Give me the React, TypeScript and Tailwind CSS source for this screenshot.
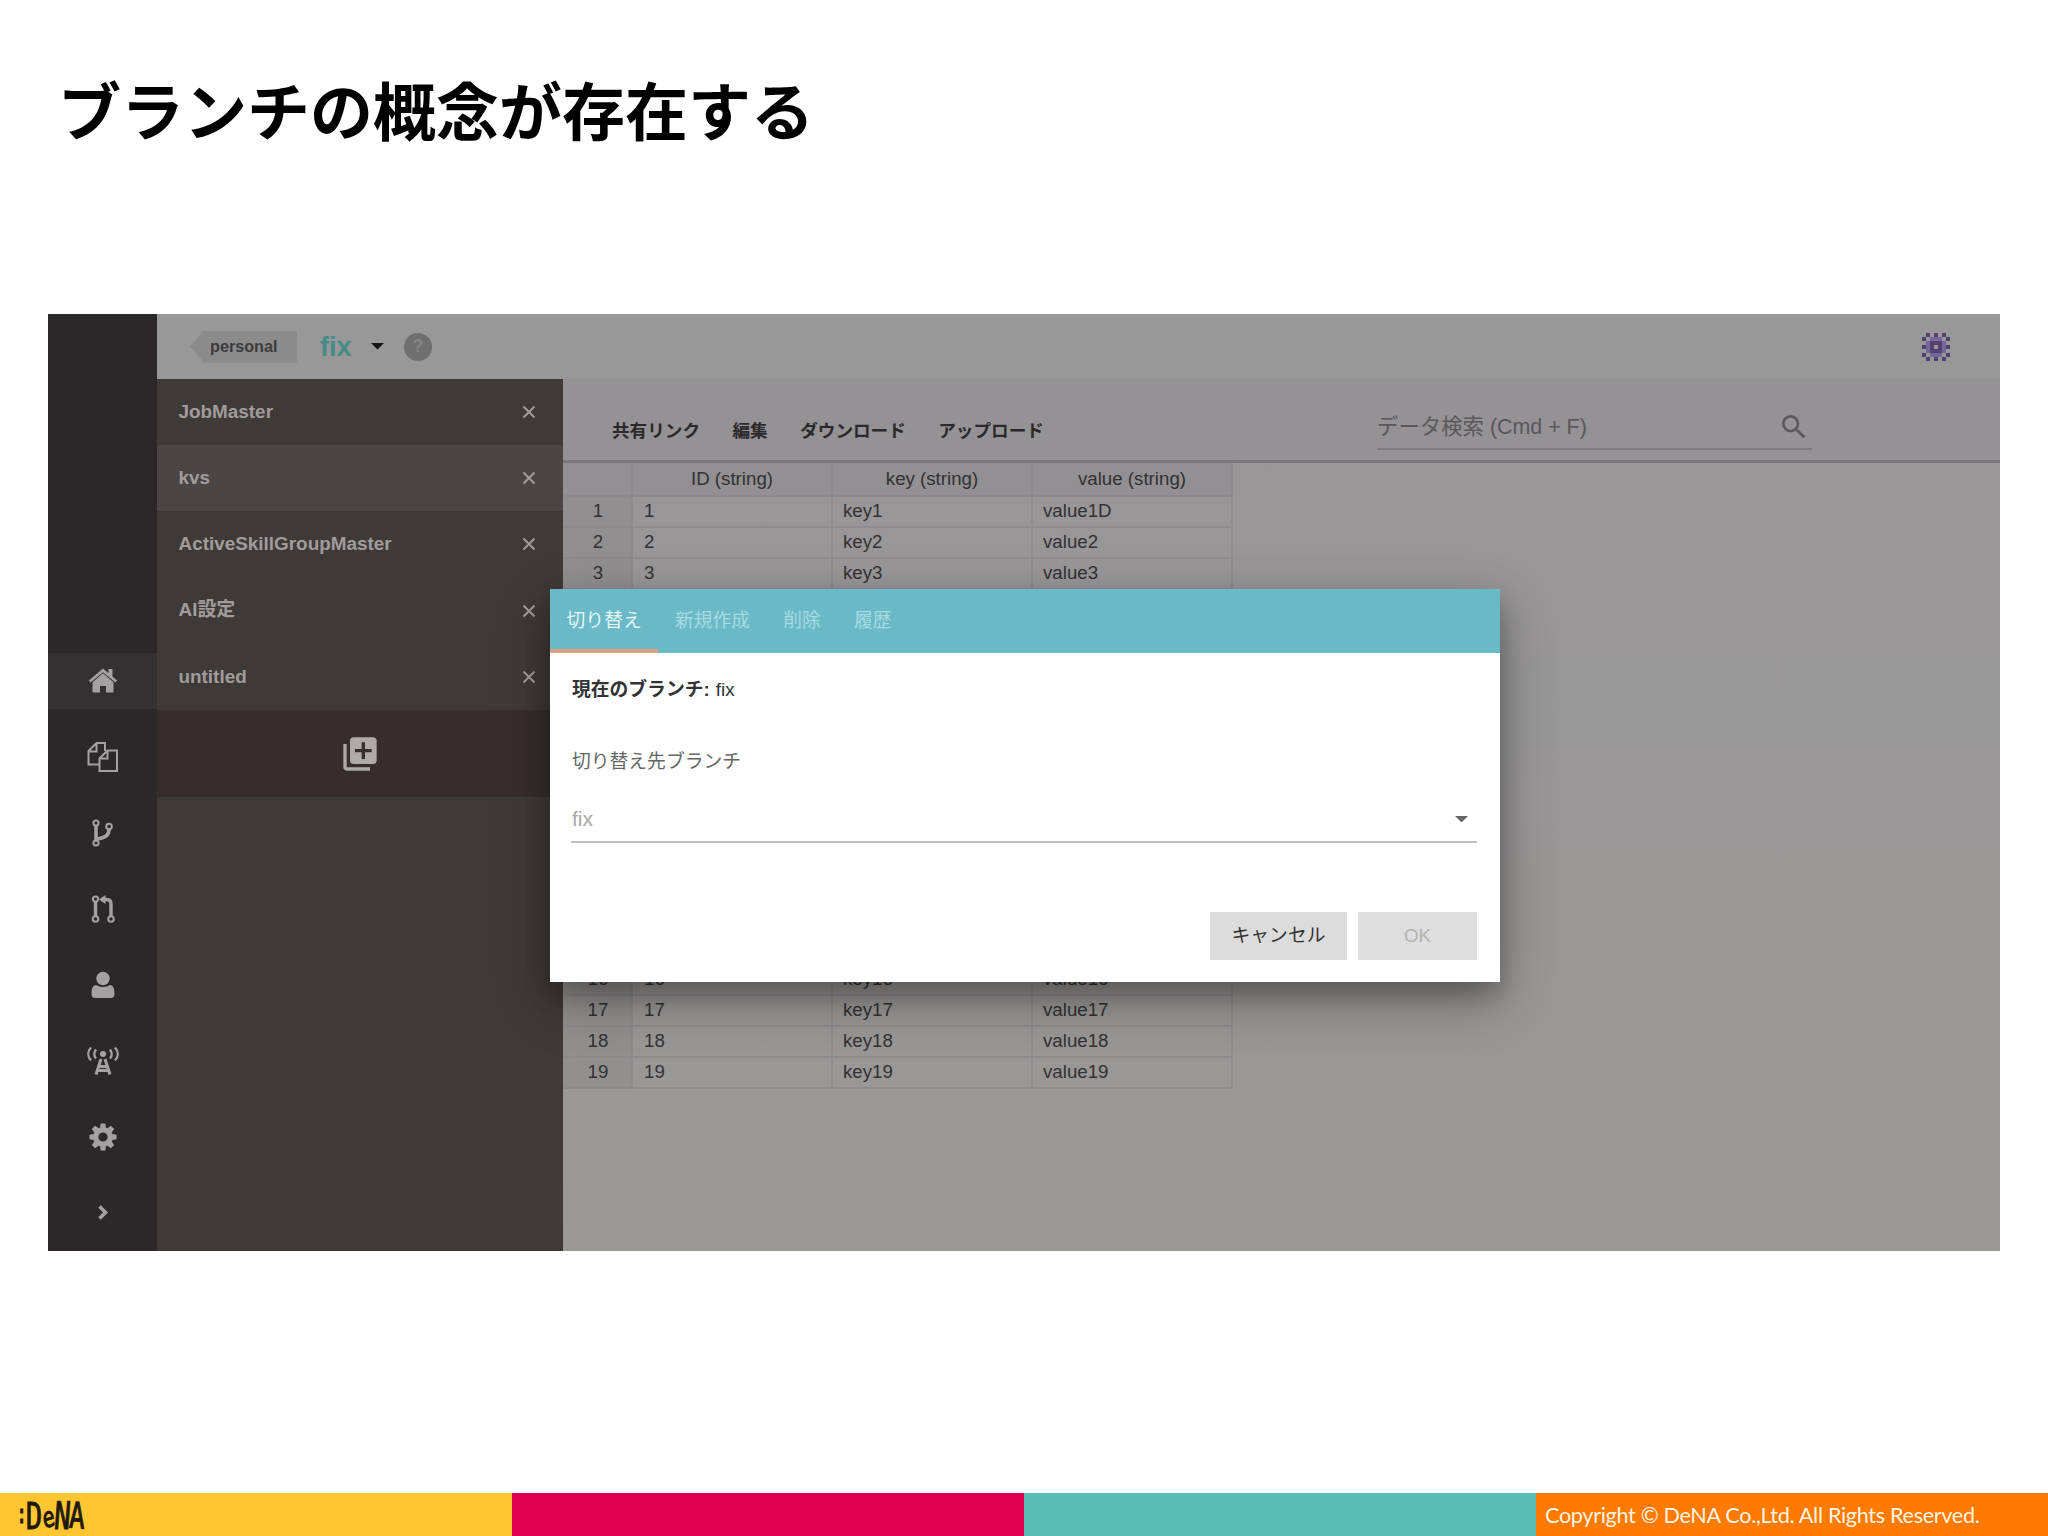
import type { ReactNode } from "react";
import { MdLibraryAdd, MdSearch } from "react-icons/md";

const UI = "font-['Liberation_Sans','Noto_Sans_CJK_JP',sans-serif]";

function Icon({ children }: { children: ReactNode }) {
  return (
    <svg width="32" height="32" viewBox="0 0 32 32" fill="none" stroke="currentColor" strokeWidth="2">
      {children}
    </svg>
  );
}

const HomeIcon = () => (
  <Icon>
    <path
      d="M16 3.5 1.8 15.6l1.8 2L16 7.2l12.4 10.4 1.8-2-4.7-4V4h-4v4.2zM16 8.300 5.500 17.200V26c0 1 .6 1.5 1.5 1.5h6V21h6v6.500h6c.9 0 1.500-.5 1.500-1.500v-8.800z"
      fill="currentColor"
      stroke="none"
    />
  </Icon>
);

const CopyIcon = () => (
  <Icon>
    <path d="M11.500 23.500H1.500V10L9.500 2H18v8M1.500 10.500h8V2M12.500 30h17.500V9.500h-9.500L12.500 17.500zM12.500 17.500h8v-8" />
  </Icon>
);

const BranchIcon = () => (
  <Icon>
    <circle cx="9" cy="6" r="2.600" />
    <circle cx="9" cy="26" r="2.600" />
    <circle cx="22" cy="9.500" r="2.800" />
    <path d="M9 8.500v15M22 12.500c0 6-3.500 8-12.500 9.500" strokeWidth="3.600" />
  </Icon>
);

const PullRequestIcon = () => (
  <Icon>
    <circle cx="8.500" cy="6" r="2.600" />
    <circle cx="8.500" cy="26" r="2.800" />
    <circle cx="24" cy="26" r="2.800" />
    <path d="M8.500 8.500v15M14 6.500h5.500c3 0 4.500 1.500 4.500 4.500v12" strokeWidth="3.400" />
    <path d="M12 6.500l6.500-4.500v9z" fill="currentColor" stroke="none" />
  </Icon>
);

const UserIcon = () => (
  <Icon>
    <g fill="currentColor" stroke="none">
      <circle cx="16" cy="9.500" r="6.700" />
      <path d="M9 16c3.800 2.500 10.200 2.500 14 0 3 0 4.500 3.500 4.500 8.500 0 3-1.300 4.500-3.500 4.500H8c-2.200 0-3.500-1.500-3.500-4.500C4.500 19.500 6 16 9 16z" />
    </g>
  </Icon>
);

const TowerIcon = () => (
  <Icon>
    <circle cx="16" cy="9" r="3" fill="currentColor" stroke="none" />
    <path d="M4 2.500c-3.700 4-3.700 9 0 13M28 2.500c3.700 4 3.700 9 0 13M9 4.500c-2.300 3-2.300 6 0 9M23 4.500c2.300 3 2.300 6 0 9" strokeWidth="2.300" />
    <path d="M14 14 9 29.500M18 14l5 15.500M12 21.500h8M11 25.500h10" strokeWidth="3" />
  </Icon>
);

const TEETH = [0, 45, 90, 135, 180, 225, 270, 315];
const GearIcon = () => (
  <Icon>
    <circle cx="16" cy="16" r="7.300" strokeWidth="5.400" />
    {TEETH.map((a) => (
      <path key={a} d="M13 6.800 13.700 2.500h4.600l.7 4.300z" fill="currentColor" stroke="none" transform={`rotate(${a} 16 16)`} />
    ))}
  </Icon>
);

const ChevronIcon = () => (
  <Icon>
    <path d="m12.500 9.500 6 6-6 6" strokeWidth="3.600" />
  </Icon>
);

const RAIL = [HomeIcon, CopyIcon, BranchIcon, PullRequestIcon, UserIcon, TowerIcon, GearIcon, ChevronIcon];

function Rail() {
  return (
    <nav className="flex w-[109px] shrink-0 flex-col gap-5 bg-[#2c2829] pt-[339px] text-[#a5a1a2]">
      {RAIL.map((Glyph, i) => (
        <div key={i} className={`flex h-14 shrink-0 items-center justify-center ${i === 0 ? "bg-[#333132]" : ""}`}>
          <Glyph />
        </div>
      ))}
    </nav>
  );
}

function Caret({ className }: { className: string }) {
  return (
    <svg width="13" height="6.500" viewBox="0 0 14 7" className={className}>
      <path d="M0 0h14L7 7z" fill="currentColor" />
    </svg>
  );
}

const AVATAR = ["0101010", "1022201", "0211120", "1210121", "0211120", "1022201", "0101010"];
const AVATAR_TONES: Record<string, string> = { "0": "", "1": "bg-[#54416f]", "2": "bg-[#77669a]" };

function TopBar() {
  return (
    <header className="flex h-[65px] shrink-0 items-center bg-[#989899] pl-[33px] pr-[50px]">
      <div className="flex h-8 w-[107px] items-center bg-[#8b8b8c] pl-5 text-[16.200px] font-bold text-[#3d3b3c] [clip-path:polygon(0_50%,14px_0,100%_0,100%_100%,14px_100%)]">
        personal
      </div>
      <span className="ml-[23px] w-[33px] whitespace-nowrap text-[27px] font-bold leading-8 text-[#458c88]">fix</span>
      <Caret className="ml-[18px] text-[#161616]" />
      <span className="ml-[20px] flex size-7 items-center justify-center rounded-full bg-[#6f6f70] text-[18px] font-bold text-[#868687]">
        ?
      </span>
      <div className="ml-auto grid grid-cols-7">
        {AVATAR.flatMap((row, y) =>
          row.split("").map((tone, x) => <span key={`${x}-${y}`} className={`size-1 ${AVATAR_TONES[tone]}`} />)
        )}
      </div>
    </header>
  );
}

const FILES = ["JobMaster", "kvs", "ActiveSkillGroupMaster", "AI設定", "untitled"];

function Sidebar() {
  return (
    <aside className="flex w-[406px] shrink-0 flex-col bg-[#3f3938] text-[#a19c9b]">
      {FILES.map((name) => (
        <div
          key={name}
          className={`flex h-[66.200px] shrink-0 items-center justify-between pl-[21.500px] pr-[27px] text-[18.900px] font-bold ${name === "kvs" ? "bg-[#4b4645]" : ""}`}
        >
          <span>{name}</span>
          <svg width="14" height="14" viewBox="0 0 14 14" stroke="currentColor" strokeWidth="2">
            <path d="M1.500 1.500l11 11M12.500 1.500l-11 11" />
          </svg>
        </div>
      ))}
      <div className="flex h-[87px] shrink-0 items-center justify-center bg-[#382d2d] pt-0.5 text-[#b0a9aa]">
        <MdLibraryAdd size={40} />
      </div>
    </aside>
  );
}

const ACTIONS = ["共有リンク", "編集", "ダウンロード", "アップロード"];

function Toolbar() {
  return (
    <div className="flex h-[84px] shrink-0 items-center justify-between border-b-[3px] border-[#7a787a] bg-[#949294] pl-[49px] pr-[188px] pt-[20px]">
      <div className="flex gap-[32.500px] pt-[3px] text-[17.600px] font-bold text-[#2b292b]">
        {ACTIONS.map((a) => (
          <span key={a}>{a}</span>
        ))}
      </div>
      <div className="flex h-[41px] w-[435px] items-center justify-between border-b-2 border-[#7d7b7d] pb-[3px] pr-0.5 text-[21.400px] text-[#5a585a]">
        <span>データ検索 (Cmd + F)</span>
        <MdSearch size={32} />
      </div>
    </div>
  );
}

const ROWS = Array.from({ length: 19 }, (_, i) => i + 1);
const GRID = "grid grid-cols-[70px_200px_200px_200px]";

function DataTable() {
  const cell = "flex items-center border-r-2 border-b-2 border-[#8a888a]/70";
  return (
    <div className="w-[670px] text-[18.700px] text-[#333133]">
      <div className={`${GRID} h-[33.500px] bg-[#929092]`}>
        <div className={cell} />
        <div className={`${cell} justify-center`}>ID (string)</div>
        <div className={`${cell} justify-center`}>key (string)</div>
        <div className={`${cell} justify-center`}>value (string)</div>
      </div>
      {ROWS.map((n) => (
        <div key={n} className={`${GRID} h-[31.200px]`}>
          <div className={`${cell} justify-center bg-black/5 pl-0.5`}>{n}</div>
          <div className={`${cell} pl-[11px]`}>{n}</div>
          <div className={`${cell} pl-[10px]`}>key{n}</div>
          <div className={`${cell} pl-[10px]`}>value{n === 1 ? "1D" : n}</div>
        </div>
      ))}
    </div>
  );
}

const TABS = ["切り替え", "新規作成", "削除", "履歴"];

function BranchDialog() {
  return (
    <section className="absolute left-[502px] top-[275px] flex h-[393px] w-[950px] flex-col bg-white text-[18.800px] shadow-[0_19px_50px_rgba(0,0,0,0.3),0_12px_22px_rgba(0,0,0,0.22)]">
      <div className="flex h-16 shrink-0 bg-[#6ab9c6]">
        {TABS.map((t, i) => (
          <div
            key={t}
            className={`flex items-center border-b-4 px-[16.600px] pt-1 ${i === 0 ? "border-[#dfa080] text-[#e6f6f8]" : "border-transparent text-[#a8dbe1]"}`}
          >
            {t}
          </div>
        ))}
      </div>
      <div className="flex flex-1 flex-col pl-[21px] pr-[23px]">
        <p className="mt-[23px] flex h-7 items-center pl-px text-[#333]">
          <b>現在のブランチ:</b>
          <span className="ml-1.5">fix</span>
        </p>
        <p className="mt-11 flex h-7 items-center pl-px text-[#666]">切り替え先ブランチ</p>
        <div className="mt-[26px] flex h-[41px] items-center justify-between border-b-2 border-[#c2c0bf] pb-[5px] pr-[9px] text-[21px] text-[#a8a8a8]">
          <span className="pl-px">fix</span>
          <Caret className="text-[#666]" />
        </div>
        <div className="mt-[69px] flex h-12 justify-end gap-[11px]">
          <button className="w-[137px] bg-[#dddcdc] text-[#333]">キャンセル</button>
          <button className="w-[119px] bg-[#dfdede] text-[#b3b1b1]">OK</button>
        </div>
      </div>
    </section>
  );
}

const LETTERS = [
  { c: ":", s: "-mr-0.5 -translate-y-0.5 text-[26px]" },
  { c: "D", s: "text-[38px]" },
  { c: "e", s: "translate-y-0.5 -rotate-12 text-[28px]" },
  { c: "N", s: "-skew-x-6 text-[38px]" },
  { c: "A", s: "-ml-0.5 rotate-3 text-[36px]" },
];

function Footer() {
  return (
    <footer className="grid h-[43px] grid-cols-4">
      <div className="flex items-center bg-[#ffc631] pl-[16px] pt-[2px]">
        <div className="flex h-9 w-[100px] origin-left scale-x-[0.72] items-center font-['DejaVu_Sans_Mono','Liberation_Mono',monospace] text-[#1e1a10] [-webkit-text-stroke:1px_#1e1a10]">
          {LETTERS.map(({ c, s }) => (
            <span key={c} className={`inline-block leading-[36px] ${s}`}>{c}</span>
          ))}
        </div>
      </div>
      <div className="bg-[#e0004f]" />
      <div className="bg-[#59bcb7]" />
      <div className="flex items-center whitespace-nowrap bg-[#ff7a00] pl-[9px] pt-[2px] font-['Lato',sans-serif] text-[21.600px] tracking-[-0.310px] text-[#fff3e0]">
        Copyright © DeNA Co.,Ltd. All Rights Reserved.
      </div>
    </footer>
  );
}

export default function App() {
  return (
    <main className={`flex h-[1536px] w-[2048px] flex-col overflow-hidden bg-white ${UI}`}>
      <h1 className="flex h-[314px] shrink-0 items-start whitespace-nowrap pl-[58px] pt-[62px] font-['Noto_Sans_CJK_JP',sans-serif] text-[63px] font-bold leading-[92px] text-black">
        ブランチの概念が存在する
      </h1>
      <div className="relative ml-12 flex h-[937px] w-[1952px] shrink-0 overflow-hidden">
        <Rail />
        <div className="flex min-w-0 flex-1 flex-col">
          <TopBar />
          <div className="flex min-h-0 flex-1">
            <Sidebar />
            <div className="flex min-w-0 flex-1 flex-col bg-gradient-to-b from-[#989698] to-[#999895]">
              <Toolbar />
              <DataTable />
            </div>
          </div>
        </div>
        <BranchDialog />
      </div>
      <div className="flex-1" />
      <Footer />
    </main>
  );
}
